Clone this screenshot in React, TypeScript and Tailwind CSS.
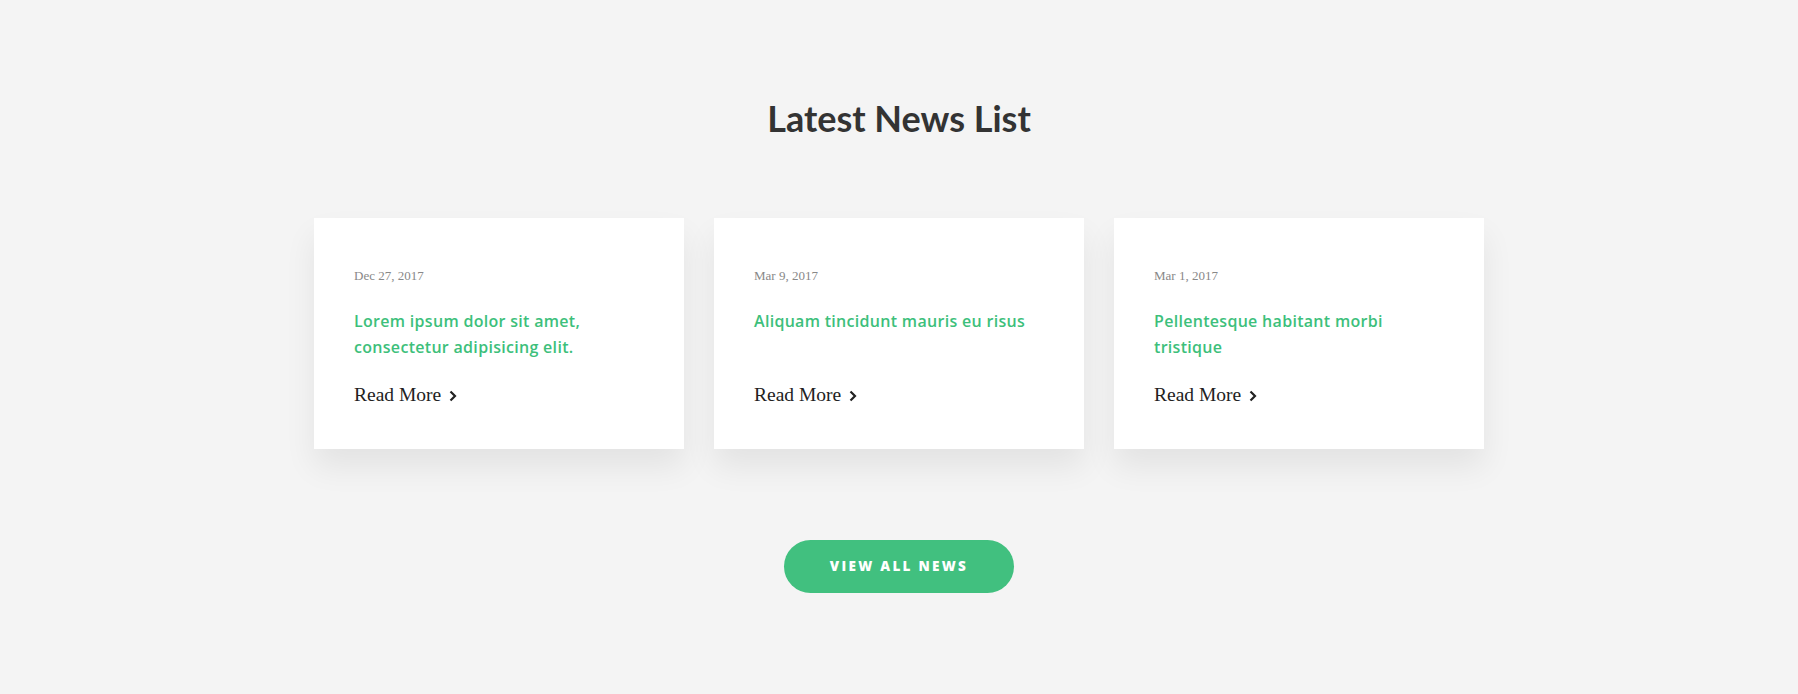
const news = [
  { date: 'Dec 27, 2017', title: 'Lorem ipsum dolor sit amet, consectetur adipisicing elit.' },
  { date: 'Mar 9, 2017', title: 'Aliquam tincidunt mauris eu risus' },
  { date: 'Mar 1, 2017', title: 'Pellentesque habitant morbi tristique' },
];

function Chevron() {
  return (
    <svg width="8" height="12" viewBox="0 0 8 12" className="ml-[8px] mt-[2px]">
      <polyline points="1.5,1.5 6,6 1.5,10.5" fill="none" stroke="#222" strokeWidth="2.2" />
    </svg>
  );
}

export default function App() {
  return (
    <div className="min-h-[694px] bg-[#f4f4f4] pt-[97px] pb-[100px]">
      {/* Heading */}
      <h2 className="text-center text-[36px] leading-[43px] font-bold text-[#333] font-['Lato',sans-serif]">
        Latest News List
      </h2>

      {/* Cards */}
      <div className="mx-auto mt-[78px] grid w-[1170px] grid-cols-3 gap-[30px]">
        {news.map((item) => (
          <div
            key={item.date}
            className="h-[231px] bg-white px-[40px] pt-[48px] shadow-[0_18px_30px_rgba(0,0,0,0.07)]"
          >
            <div className="text-[13px] leading-[20px] text-[#888] font-['Liberation_Serif',serif]">
              {item.date}
            </div>
            <div className="mt-[22px] min-h-[52px] w-[285px] text-[16px] leading-[26px] font-semibold tracking-[0.3px] text-[#3dbf7b] font-['Open_Sans',sans-serif]">
              {item.title}
            </div>
            <a href="#" className="mt-[21px] flex items-center text-[19.5px] leading-[28px] text-[#222] font-['Liberation_Serif',serif]">
              Read More
              <Chevron />
            </a>
          </div>
        ))}
      </div>

      {/* Button */}
      <div className="mt-[91px] flex justify-center">
        <button className="h-[53px] w-[230px] rounded-full bg-[#41c07f] text-[13.5px] font-extrabold uppercase tracking-[2.3px] text-white font-['Open_Sans',sans-serif]">
          View all news
        </button>
      </div>
    </div>
  );
}
